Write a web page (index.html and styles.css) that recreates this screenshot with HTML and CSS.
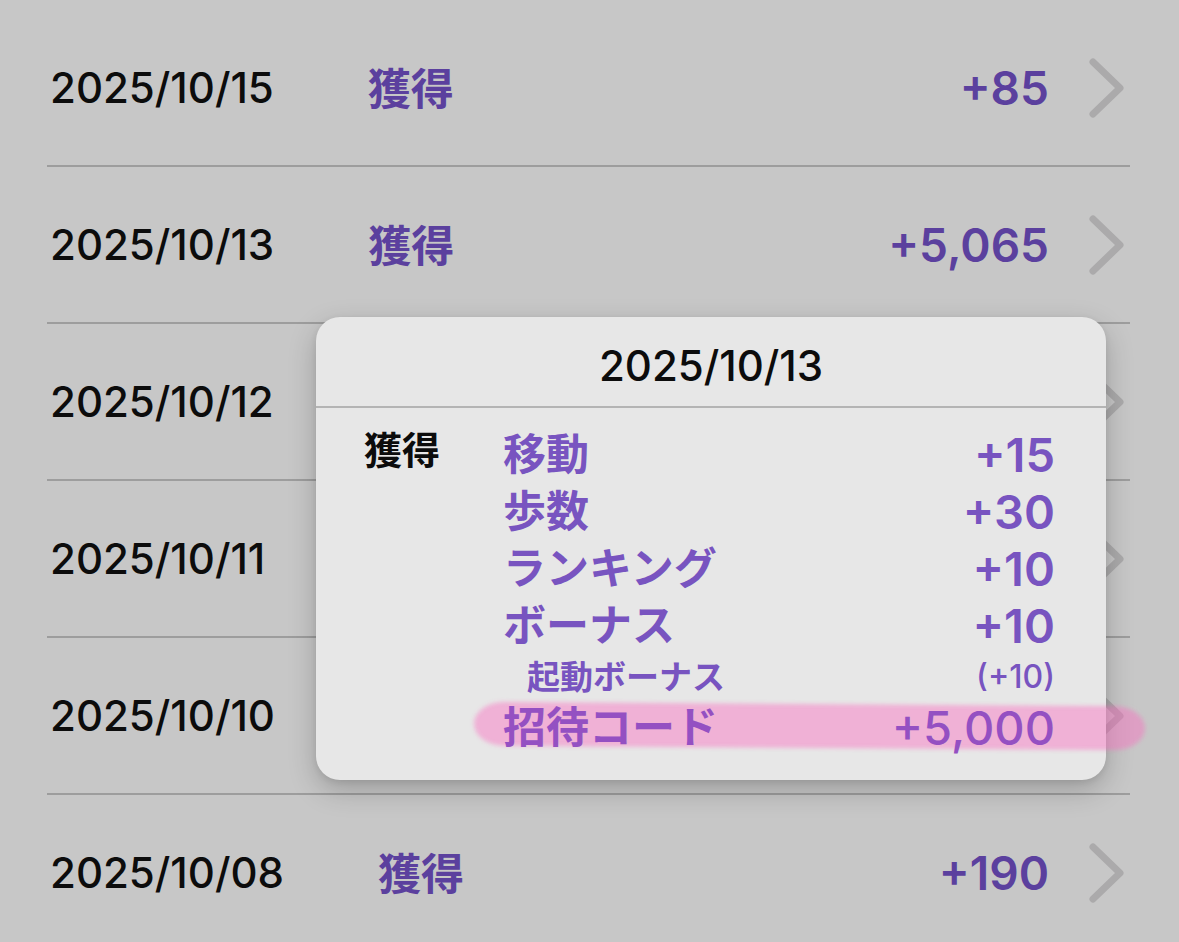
FILE: index.html
```html
<!DOCTYPE html>
<html lang="ja">
<head>
<meta charset="utf-8">
<title>履歴</title>
<link rel="stylesheet" href="styles.css">
</head>
<body>
<div class="screen">
  <ul class="list">
    <li class="row">
      <span class="date">2025/10/15</span>
      <span class="kind">獲得</span>
      <span class="amount">+85</span>
      <svg class="chev" viewBox="0 0 37 62"><polyline points="5,5 32,31 5,57"/></svg>
    </li>
    <li class="row">
      <span class="date">2025/10/13</span>
      <span class="kind">獲得</span>
      <span class="amount">+5,065</span>
      <svg class="chev" viewBox="0 0 37 62"><polyline points="5,5 32,31 5,57"/></svg>
    </li>
    <li class="row">
      <span class="date">2025/10/12</span>
      <span class="amount"></span>
      <svg class="chev" viewBox="0 0 37 62"><polyline points="5,5 32,31 5,57"/></svg>
    </li>
    <li class="row">
      <span class="date">2025/10/11</span>
      <span class="amount"></span>
      <svg class="chev" viewBox="0 0 37 62"><polyline points="5,5 32,31 5,57"/></svg>
    </li>
    <li class="row">
      <span class="date">2025/10/10</span>
      <span class="amount"></span>
      <svg class="chev" viewBox="0 0 37 62"><polyline points="5,5 32,31 5,57"/></svg>
    </li>
    <li class="row">
      <span class="date">2025/10/08</span>
      <span class="kind">獲得</span>
      <span class="amount">+190</span>
      <svg class="chev" viewBox="0 0 37 62"><polyline points="5,5 32,31 5,57"/></svg>
    </li>
  </ul>

  <div class="popup">
    <div class="marker"></div>
    <div class="popup-head">2025/10/13</div>
    <div class="popup-body">
      <div class="popup-label">獲得</div>
      <div class="items">
        <div class="item"><span class="item-name">移動</span><span class="item-val">+15</span></div>
        <div class="item"><span class="item-name">歩数</span><span class="item-val">+30</span></div>
        <div class="item"><span class="item-name">ランキング</span><span class="item-val">+10</span></div>
        <div class="item"><span class="item-name">ボーナス</span><span class="item-val">+10</span></div>
        <div class="item sub"><span class="item-name">起動ボーナス</span><span class="item-val">(+10)</span></div>
        <div class="item invite"><span class="item-name">招待コード</span><span class="item-val">+5,000</span></div>
      </div>
    </div>
  </div>
</div>
</body>
</html>
```

FILE: styles.css
```css
* { box-sizing: border-box; }

html, body {
  margin: 0;
  padding: 0;
}

body {
  background: #c7c7c7;
  font-family: Inter, "Noto Sans CJK JP", sans-serif;
  overflow: hidden;
}

.screen {
  position: relative;
  width: 1179px;
  height: 942px;
  overflow: hidden;
}

.list {
  list-style: none;
  margin: 0;
  padding: 10px 49px 0 47px;
}

.row {
  display: flex;
  align-items: center;
  height: 157px;
  padding-left: 3px;
  border-bottom: 2px solid #9d9d9d;
}

.date {
  font-size: 42px;
  font-weight: 500;
  color: #0c0c0c;
}

.kind {
  margin-left: 94px;
  font-family: "Noto Sans CJK JP", sans-serif;
  font-size: 43px;
  font-weight: 700;
  color: #5b409e;
  position: relative;
  top: -2px;
}

.amount {
  flex: 1;
  text-align: right;
  font-size: 46px;
  font-weight: 600;
  color: #5b409e;
}

.chev {
  width: 37px;
  height: 62px;
  margin-left: 39px;
  margin-right: 5px;
  fill: none;
  stroke: #abaaab;
  stroke-width: 7;
  stroke-linecap: round;
  stroke-linejoin: round;
}

.popup {
  position: absolute;
  left: 316px;
  top: 317px;
  width: 790px;
  height: 463px;
  background: #e7e7e7;
  border-radius: 24px;
  box-shadow: 0 10px 28px rgba(0, 0, 0, 0.22), 0 2px 6px rgba(0, 0, 0, 0.08);
}

.popup-head {
  height: 91px;
  display: flex;
  align-items: center;
  justify-content: center;
  padding-top: 8px;
  font-size: 42px;
  font-weight: 500;
  color: #0c0c0c;
  border-bottom: 2px solid #b4b4b4;
}

.popup-body {
  position: relative;
  display: grid;
  grid-template-columns: 139px 1fr;
  padding: 18px 51px 0 48px;
}

.popup-label {
  font-family: "Noto Sans CJK JP", sans-serif;
  font-size: 38px;
  font-weight: 700;
  line-height: 38px;
  padding-top: 3px;
  color: #0c0c0c;
}

.items {
  display: flex;
  flex-direction: column;
}

.item {
  display: flex;
  justify-content: space-between;
  align-items: center;
  height: 57px;
  color: #7854c0;
}

.item-name {
  font-family: "Noto Sans CJK JP", sans-serif;
  font-size: 43px;
  font-weight: 700;
  line-height: 50px;
  padding-bottom: 7px;
}

.item-val {
  font-size: 47px;
  font-weight: 600;
}

.item.sub {
  height: 45px;
  padding-left: 24px;
}

.item.sub .item-name {
  font-size: 33px;
  line-height: 40px;
  padding-bottom: 4px;
}

.item.sub .item-val {
  font-size: 32px;
  font-weight: 500;
}

.item.invite {
  color: #9450c2;
}

.item.invite .item-val {
  font-weight: 500;
}

.marker {
  position: absolute;
  left: 158px;
  top: 387px;
  width: 671px;
  height: 44px;
  border-radius: 30px / 22px;
  background: rgba(251, 106, 192, 0.44);
  filter: blur(2px);
  transform: rotate(0.4deg);
}
```
